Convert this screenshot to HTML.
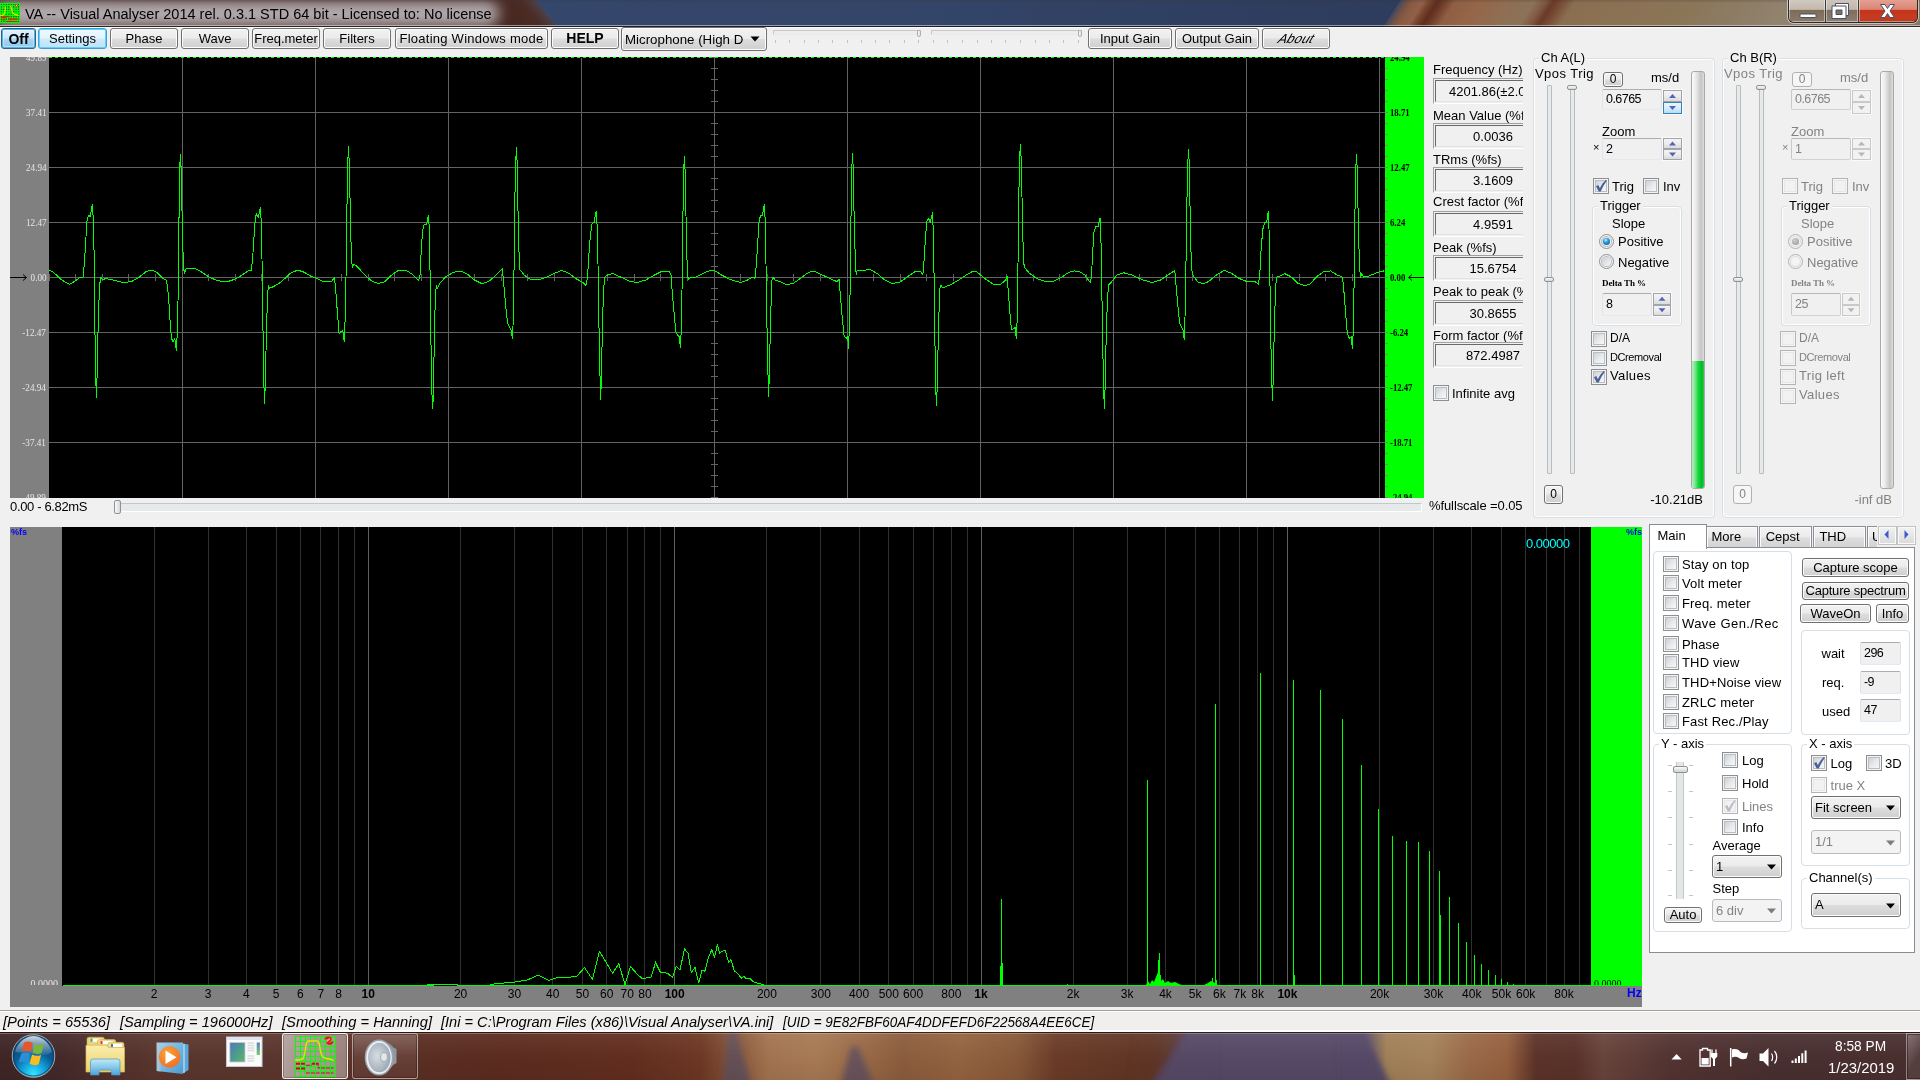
<!DOCTYPE html>
<html><head><meta charset="utf-8"><title>VA</title>
<style>
*{box-sizing:border-box;margin:0;padding:0}
html,body{width:1920px;height:1080px;overflow:hidden}
body{background:#f0f0f0;font-family:"Liberation Sans",sans-serif;font-size:13px;color:#000;position:relative}
.a{position:absolute}
#gs{position:absolute;left:0;top:0;width:1920px;height:1080px;will-change:transform}
.t{position:absolute;white-space:nowrap;line-height:1}
.btn{position:absolute;border:1px solid #707070;border-radius:3px;background:linear-gradient(#f2f2f2 0%,#ebebeb 48%,#dddddd 52%,#cfcfcf 100%);box-shadow:inset 0 0 0 1px #fcfcfc;text-align:center;white-space:nowrap;overflow:hidden}
.dis{color:#838383}
.cb{position:absolute;width:16px;height:16px;border:1px solid #8e8f8f;background:#f4f4f4}
.cb i{position:absolute;left:1px;top:1px;width:12px;height:12px;border:1px solid #b9bec4;background:linear-gradient(135deg,#cdd1d6 0,#e6e8ea 50%,#f8f8f9 100%)}
.cbd{border-color:#b4b4b4;background:#f6f6f6}
.cbd i{border-color:#e4e6e8;background:#f2f2f2}
.grp{position:absolute;border:1px solid #d5dfe5;border-radius:4px;box-shadow:inset 0 0 0 1px #fff}
.gl{position:absolute;background:#f0f0f0;white-space:nowrap;line-height:1;padding:0 2px}
.sunk{position:absolute;border:1px solid;border-color:#a0a0a0 #fff #fff #a0a0a0;background:#f0f0f0}
.sunk i{position:absolute;left:1px;top:1px;right:1px;bottom:1px;border:1px solid;border-color:#696969 #e3e3e3 #e3e3e3 #696969}
.edit{position:absolute;border:1px solid #abadb3;border-color:#abadb3 #dbdfe6 #e3e9ef #e2e3ea;background:#f0f0f0;border-radius:2px}
</style></head><body><div id="gs">
<!-- title bar -->
<div class="a" id="tb" style="left:0;top:0;width:1920px;height:27px;overflow:hidden;background:linear-gradient(90deg,#35486d 0,#33466a 45%,#2e3c5d 70%,#2c3a5a 100%)">
<div class="a" style="left:-40px;top:0;width:577px;height:27px;transform-origin:0 0;transform:skewX(39deg);background:linear-gradient(90deg,#4c2d26 0,#48271f 60%,#47261e 90%,#4a2c25 97%,#4e3a3c 99%,#3f4661 100%)"></div>
<div class="a" style="left:1383px;top:0;width:600px;height:27px;transform-origin:0 100%;transform:skewX(-33deg);background:linear-gradient(90deg,#3a4766 0,#6a5048 6px,#8a5a42 14px,#91604a 24px,#7a452f 30px,#5e2e1e 38px,#6c3a26 44px,#8f5e44 56px,#956648 80px,#8f6e52 110px,#8b7258 135px,#80583f 146px,#6a3a28 154px,#74462f 160px,#8a6e50 176px,#8c7355 250px,#8b7658 300px,#8d7c64 340px,#928470 400px,#8c7c68 440px,#857460 600px)"></div>
<div class="a" style="left:-6px;top:1px;width:505px;height:25px;border-radius:12px;background:rgba(228,236,246,.68);filter:blur(7px)"></div>
<div class="a" style="left:0;top:0;width:1920px;height:3px;background:linear-gradient(rgba(60,50,50,.25),rgba(40,20,20,0))"></div>
<span class="t" style="left:25px;top:6px;font-size:15.5px;color:#000;transform-origin:0 0;transform:scaleX(.9366)" id="ttxt">VA -- Visual Analyser 2014 rel. 0.3.1 STD 64 bit - Licensed to: No license</span>
<svg class="a" style="left:0px;top:3px" width="20" height="20" viewBox="0 0 41 41"><rect x="0.5" y="0.5" width="40" height="40" fill="#3a5a3a"/><path d="M3 3H38V38H3Z" fill="#1e3a1e"/><path d="M5.500 5.500h5v5h-5zM15.500 15.500h5v5h-5zM25.500 10.500h5v5h-5zM30.500 20.500h5v5h-5zM10.500 25.500h5v5h-5z" fill="#7a5a80"/><path d="M1 27h9v2h-9zM1 32h9v2h-9zM10 29h7v1h-7zM17 27h7v2h-7zM11 32v5h14v1h-15v-6zM24 29v3h15v1h-16v-4zM26 37h13v1h-13z" fill="#c01008"/><path d="M0.5 0V41M0 0.5H41M5.5 0V41M0 5.5H41M10.5 0V41M0 10.5H41M15.5 0V41M0 15.5H41M20.5 0V41M0 20.5H41M25.5 0V41M0 25.5H41M30.5 0V41M0 30.5H41M35.5 0V41M0 35.5H41M40.5 0V41M0 40.5H41" stroke="#00ff00" stroke-width="2.6" shape-rendering="auto"/><path d="M2 29H12L12 27.500H18M2 34.500H11M20.500 30V36M13 38H36M22 33H36" stroke="#ee1010" stroke-width="2.2"/><path d="M0 25.500L6 25L9 22C10.500 18 10.500 12 11.500 8M22 6C23.500 12 24 18 27 21.500C30 24.500 34 24.500 38 25.500" stroke="#f0e000" stroke-width="2.400" fill="none"/><path d="M30 6.500L32 3L37 3L35 8.500Z" fill="#f01010"/><path d="M32.500 7.500L34.500 3.500" stroke="#fff" stroke-width="1.800"/></svg>
<div class="a" style="left:1788px;top:-1px;width:130px;height:24px;border:1px solid #2b2b2b;border-top:none;border-radius:0 0 6px 6px;box-shadow:0 0 0 1px rgba(255,255,255,.55);overflow:hidden">
<div class="a" style="left:0;top:0;width:36px;height:23px;background:linear-gradient(#d3cbc2 0,#c3b8ac 45%,#7e6c5a 50%,#8b7a68 100%);box-shadow:inset 0 0 0 1px rgba(255,255,255,.45)"></div>
<div class="a" style="left:36px;top:0;width:1px;height:23px;background:#3a3a3a"></div>
<div class="a" style="left:37px;top:0;width:32px;height:23px;background:linear-gradient(#cfc7bf 0,#bfb5aa 45%,#7f6e5e 50%,#8c7e74 100%);box-shadow:inset 0 0 0 1px rgba(255,255,255,.45)"></div>
<div class="a" style="left:69px;top:0;width:1px;height:23px;background:#3a3a3a"></div>
<div class="a" style="left:70px;top:0;width:59px;height:23px;background:linear-gradient(#e6a294 0,#dc8574 45%,#c2351b 50%,#c93a1e 75%,#b53a26 100%);box-shadow:inset 0 0 0 1px rgba(255,255,255,.4)"></div>
</div>
<svg class="a" style="left:1788px;top:0" width="132" height="24" viewBox="1788 0 132 24">
<rect x="1800" y="14" width="16" height="3.5" rx="0.8" fill="#fff" stroke="#4a4f63" stroke-width="1"/>
<path d="M1835.5 3.5H1848.5V15.5H1845.5V6.5H1835.5Z" fill="#fff" stroke="#4a4f63" stroke-width="1"/>
<path d="M1832 6H1846V18.5H1832ZM1836 10V14.5H1842V10Z" fill="#fff" fill-rule="evenodd" stroke="#4a4f63" stroke-width="1"/>
<path d="M1880.5 4.5H1885L1887.5 8.5L1890 4.5H1894.5L1890 11L1894.5 17.5H1890L1887.5 13.5L1885 17.5H1880.5L1885 11Z" fill="#fff" stroke="#4a4f63" stroke-width="1" stroke-linejoin="round"/>
</svg>
<div class="a" style="left:0;top:25px;width:1920px;height:1px;background:rgba(235,230,235,.55)"></div>
<div class="a" style="left:0;top:26px;width:1920px;height:1px;background:rgba(22,22,30,.82)"></div>
</div>
<!-- toolbar -->
<div class="a" style="left:0;top:27px;width:1920px;height:1px;background:#fafafa"></div>
<div class="btn" style="left:1px;top:28px;width:35px;height:21px;line-height:19px;font-size:13px;border-color:#2c628b;background:linear-gradient(#e3f2fc 0,#c9e7fa 48%,#a9d6f3 52%,#92c6ea 100%);box-shadow:inset 0 0 0 1px #48b5e6, inset 0 0 0 2px rgba(255,255,255,.35);font-size:14px;line-height:21px"><b>Off</b></div>
<div class="btn" style="left:38px;top:28px;width:69px;height:21px;line-height:19px;font-size:13px;border-color:#3c9fd9;background:linear-gradient(#f0f9fe 0,#e2f3fc 48%,#cfeafa 52%,#c0e2f6 100%);box-shadow:inset 0 0 0 1px #5fd2f8">Settings</div>
<div class="btn" style="left:110px;top:28px;width:68px;height:21px;line-height:19px;font-size:13px;">Phase</div>
<div class="btn" style="left:181px;top:28px;width:68px;height:21px;line-height:19px;font-size:13px;">Wave</div>
<div class="btn" style="left:252px;top:28px;width:68px;height:21px;line-height:19px;font-size:13px;">Freq.meter</div>
<div class="btn" style="left:323px;top:28px;width:68px;height:21px;line-height:19px;font-size:13px;">Filters</div>
<div class="btn" style="left:395px;top:28px;width:153px;height:21px;line-height:19px;font-size:13px;letter-spacing:.25px">Floating Windows mode</div>
<div class="btn" style="left:551px;top:28px;width:68px;height:21px;line-height:19px;font-size:13px;font-size:14px"><b>HELP</b></div>
<div class="btn" style="left:621px;top:27px;width:146px;height:24px;line-height:24px;text-align:left;padding-left:3px;font-size:13.3px">Microphone (High D</div>
<svg class="a" style="left:750px;top:36px" width="10" height="6"><path d="M0.5 0.5H9.5L5 5.5Z" fill="#000"/></svg>
<div class="a" style="left:773px;top:30px;width:147px;height:5px;border:1px solid #c4cacc;border-bottom-color:#e8ebec;border-radius:1px;background:#eceeee"></div>
<div class="a" style="left:917px;top:30px;width:4px;height:7px;border:1px solid #a9aeb1;border-radius:1px 1px 2px 2px;background:linear-gradient(90deg,#f8f8f8,#e2e2e2)"></div>
<div class="a" style="left:775px;top:40px;width:1px;height:3px;background:#c2c2c2"></div><div class="a" style="left:789px;top:40px;width:1px;height:3px;background:#c2c2c2"></div><div class="a" style="left:804px;top:40px;width:1px;height:3px;background:#c2c2c2"></div><div class="a" style="left:818px;top:40px;width:1px;height:3px;background:#c2c2c2"></div><div class="a" style="left:832px;top:40px;width:1px;height:3px;background:#c2c2c2"></div><div class="a" style="left:847px;top:40px;width:1px;height:3px;background:#c2c2c2"></div><div class="a" style="left:861px;top:40px;width:1px;height:3px;background:#c2c2c2"></div><div class="a" style="left:875px;top:40px;width:1px;height:3px;background:#c2c2c2"></div><div class="a" style="left:889px;top:40px;width:1px;height:3px;background:#c2c2c2"></div><div class="a" style="left:904px;top:40px;width:1px;height:3px;background:#c2c2c2"></div><div class="a" style="left:918px;top:40px;width:1px;height:3px;background:#c2c2c2"></div>
<div class="a" style="left:931px;top:30px;width:149px;height:5px;border:1px solid #c4cacc;border-bottom-color:#e8ebec;border-radius:1px;background:#eceeee"></div>
<div class="a" style="left:1078px;top:30px;width:4px;height:7px;border:1px solid #a9aeb1;border-radius:1px 1px 2px 2px;background:linear-gradient(90deg,#f8f8f8,#e2e2e2)"></div>
<div class="a" style="left:933px;top:40px;width:1px;height:3px;background:#c2c2c2"></div><div class="a" style="left:947px;top:40px;width:1px;height:3px;background:#c2c2c2"></div><div class="a" style="left:962px;top:40px;width:1px;height:3px;background:#c2c2c2"></div><div class="a" style="left:977px;top:40px;width:1px;height:3px;background:#c2c2c2"></div><div class="a" style="left:991px;top:40px;width:1px;height:3px;background:#c2c2c2"></div><div class="a" style="left:1005px;top:40px;width:1px;height:3px;background:#c2c2c2"></div><div class="a" style="left:1020px;top:40px;width:1px;height:3px;background:#c2c2c2"></div><div class="a" style="left:1035px;top:40px;width:1px;height:3px;background:#c2c2c2"></div><div class="a" style="left:1049px;top:40px;width:1px;height:3px;background:#c2c2c2"></div><div class="a" style="left:1063px;top:40px;width:1px;height:3px;background:#c2c2c2"></div><div class="a" style="left:1078px;top:40px;width:1px;height:3px;background:#c2c2c2"></div>
<div class="btn" style="left:1088px;top:28px;width:84px;height:21px;line-height:19px;font-size:13px;">Input Gain</div>
<div class="btn" style="left:1175px;top:28px;width:84px;height:21px;line-height:19px;font-size:13px;">Output Gain</div>
<div class="btn" style="left:1262px;top:28px;width:68px;height:21px;line-height:19px;font-size:13px;"><span style="display:inline-block;transform:skewX(-30deg);letter-spacing:.2px">About</span></div>
<!-- oscilloscope -->
<div class="a" style="left:10px;top:57px;width:39px;height:441px;background:#808080"></div>
<div class="a" style="left:49px;top:57px;width:1336px;height:441px;background:#000"></div>
<div class="a" style="left:1385px;top:57px;width:39px;height:441px;background:#00ff00"></div>
<svg class="a" style="left:0;top:0" width="1440" height="500" viewBox="0 0 1440 500">
<path d="M49 112.5H1385M49 167.5H1385M49 222.5H1385M49 277.5H1385M49 332.5H1385M49 387.5H1385M49 442.5H1385M182.5 58V498M315.5 58V498M448.5 58V498M581.5 58V498M714.5 58V498M847.5 58V498M980.5 58V498M1113.5 58V498M1246.5 58V498M1379.5 58V498M711 57.5H718M711 68.5H718M711 79.5H718M711 90.5H718M711 101.5H718M711 112.5H718M711 123.5H718M711 134.5H718M711 145.5H718M711 156.5H718M711 167.5H718M711 178.5H718M711 189.5H718M711 200.5H718M711 211.5H718M711 222.5H718M711 233.5H718M711 244.5H718M711 255.5H718M711 266.5H718M711 277.5H718M711 288.5H718M711 299.5H718M711 310.5H718M711 321.5H718M711 332.5H718M711 343.5H718M711 354.5H718M711 365.5H718M711 376.5H718M711 387.5H718M711 398.5H718M711 409.5H718M711 420.5H718M711 431.5H718M711 442.5H718M711 453.5H718M711 464.5H718M711 475.5H718M711 486.5H718M711 497.5H718M49.5 274V281M75.5 274V281M102.5 274V281M128.5 274V281M155.5 274V281M182.5 274V281M208.5 274V281M235.5 274V281M261.5 274V281M288.5 274V281M315.5 274V281M341.5 274V281M368.5 274V281M394.5 274V281M421.5 274V281M448.5 274V281M474.5 274V281M501.5 274V281M527.5 274V281M554.5 274V281M581.5 274V281M607.5 274V281M634.5 274V281M660.5 274V281M687.5 274V281M714.5 274V281M740.5 274V281M767.5 274V281M793.5 274V281M820.5 274V281M847.5 274V281M873.5 274V281M900.5 274V281M926.5 274V281M953.5 274V281M980.5 274V281M1006.5 274V281M1033.5 274V281M1059.5 274V281M1086.5 274V281M1113.5 274V281M1139.5 274V281M1166.5 274V281M1192.5 274V281M1219.5 274V281M1246.5 274V281M1272.5 274V281M1299.5 274V281M1325.5 274V281M1352.5 274V281M1379.5 274V281" stroke="#626262" stroke-width="1" fill="none" shape-rendering="crispEdges"/>
<path d="M49 57.5H1385" stroke="#00ff00" stroke-width="1" stroke-dasharray="3 3" shape-rendering="crispEdges"/>
<path d="M1385 57.5H1388M1385 68.5H1388M1385 79.5H1388M1385 90.5H1388M1385 101.5H1388M1385 112.5H1388M1385 123.5H1388M1385 134.5H1388M1385 145.5H1388M1385 156.5H1388M1385 167.5H1388M1385 178.5H1388M1385 189.5H1388M1385 200.5H1388M1385 211.5H1388M1385 222.5H1388M1385 233.5H1388M1385 244.5H1388M1385 255.5H1388M1385 266.5H1388M1385 277.5H1388M1385 288.5H1388M1385 299.5H1388M1385 310.5H1388M1385 321.5H1388M1385 332.5H1388M1385 343.5H1388M1385 354.5H1388M1385 365.5H1388M1385 376.5H1388M1385 387.5H1388M1385 398.5H1388M1385 409.5H1388M1385 420.5H1388M1385 431.5H1388M1385 442.5H1388M1385 453.5H1388M1385 464.5H1388M1385 475.5H1388M1385 486.5H1388M1385 497.5H1388" stroke="#808080" stroke-width="1" shape-rendering="crispEdges"/>
<path d="M49.4 270.1 L53.4 272.3 L61.5 279.8 L69.5 284.4 L76.2 280.3 L80.3 277.1 L83.0 277.1 L84.3 264.2 L85.6 242.8 L87.0 221.3 L88.3 215.4 L90.2 216.4 L92.3 204.4 L93.4 221.3 L94.2 258.9 L94.8 323.3 L95.8 379.7 L96.4 397.7 L97.2 371.6 L98.3 317.9 L99.6 285.7 L100.7 277.1 L102.3 279.8 L105.8 278.5 L112.5 279.8 L123.2 282.5 L131.3 281.7 L139.3 277.1 L146.0 271.7 L151.4 270.1 L156.8 272.3 L162.1 277.7 L166.2 280.3 L167.5 285.7 L168.9 301.8 L170.2 323.3 L171.5 338.1 L172.9 342.1 L174.8 338.1 L176.4 350.7 L177.2 334.0 L178.0 301.8 L178.5 264.2 L179.1 210.5 L179.6 170.3 L180.4 154.2 L181.2 170.3 L182.0 210.5 L182.8 248.1 L183.9 269.6 L184.4 273.6 L186.3 268.3 L194.4 268.3 L201.1 271.7 L207.8 276.3 L214.5 279.5 L222.6 281.7 L230.6 280.9 L238.7 277.1 L245.4 272.8 L249.4 270.1 L251.3 270.9 L252.6 258.9 L254.0 237.4 L255.3 218.6 L256.4 213.8 L258.3 217.2 L260.4 207.3 L261.2 221.3 L262.0 258.9 L262.8 317.9 L263.9 385.0 L264.7 403.8 L265.5 371.6 L266.8 317.9 L268.2 285.2 L269.5 288.4 L273.6 286.5 L278.9 283.6 L284.3 279.0 L291.0 272.8 L297.7 270.1 L304.4 272.3 L311.1 276.3 L316.5 278.2 L323.2 281.7 L331.3 281.7 L334.5 277.7 L335.8 291.1 L337.4 312.6 L339.1 334.0 L341.2 331.3 L342.8 330.8 L344.2 341.5 L345.2 317.9 L346.0 277.7 L346.8 215.9 L347.7 164.9 L348.5 146.1 L349.3 164.9 L350.3 210.5 L351.4 258.9 L352.5 267.4 L354.1 264.2 L358.1 267.4 L364.8 275.0 L371.5 280.9 L378.3 283.6 L385.0 281.7 L391.7 275.0 L398.4 270.4 L406.4 270.4 L413.2 275.0 L418.5 280.3 L420.1 275.0 L421.2 250.8 L422.6 230.7 L424.4 224.0 L426.6 224.0 L428.5 215.4 L429.3 229.3 L430.1 275.0 L430.9 339.4 L431.9 393.1 L432.8 408.4 L433.6 385.0 L434.6 317.9 L436.2 285.7 L437.3 288.4 L440.0 283.0 L445.4 277.1 L453.4 272.3 L460.1 270.9 L466.8 273.6 L473.6 279.5 L481.6 283.6 L488.3 281.7 L495.0 276.3 L500.4 270.9 L502.3 268.3 L503.9 285.7 L505.8 307.2 L507.7 323.3 L509.8 327.3 L511.1 330.0 L512.5 338.9 L513.3 317.9 L514.1 264.2 L514.9 197.1 L515.7 162.2 L516.5 147.4 L517.2 164.9 L518.0 210.5 L518.8 248.1 L519.9 269.6 L521.5 271.7 L524.2 275.0 L529.5 279.0 L537.6 279.8 L545.6 277.7 L553.7 273.6 L561.7 270.4 L568.5 273.1 L576.5 279.0 L583.2 282.5 L585.9 285.2 L587.5 277.7 L588.6 258.9 L590.2 237.4 L591.8 224.0 L594.0 222.6 L596.1 211.3 L597.2 226.6 L598.0 264.2 L598.8 317.9 L599.9 371.6 L600.7 399.8 L601.5 371.6 L602.6 317.9 L603.9 285.7 L605.0 277.1 L607.4 275.0 L612.8 273.6 L620.8 277.1 L628.9 280.9 L636.9 282.5 L646.3 279.8 L654.4 275.0 L661.1 271.7 L669.1 271.5 L671.0 275.0 L672.6 296.4 L674.5 317.9 L676.1 332.7 L678.0 335.4 L679.3 336.7 L680.4 347.4 L681.2 331.3 L682.0 291.1 L682.8 224.0 L683.6 173.0 L684.4 156.0 L685.2 173.0 L686.0 215.9 L686.8 256.2 L687.9 277.1 L688.7 279.8 L690.6 277.1 L696.0 277.1 L702.7 273.6 L709.4 270.7 L714.8 270.7 L721.5 275.0 L730.9 279.8 L740.3 282.5 L747.0 280.3 L752.3 277.1 L755.0 278.2 L756.4 264.2 L757.7 242.8 L759.1 221.3 L760.4 215.9 L762.3 215.9 L764.4 204.4 L765.2 221.3 L766.0 264.2 L766.8 317.9 L767.9 371.6 L768.7 396.6 L769.5 366.2 L770.6 317.9 L771.9 280.3 L773.0 276.8 L775.2 280.3 L780.5 281.7 L787.2 284.9 L794.0 283.0 L802.0 277.1 L808.7 272.3 L814.1 270.9 L820.8 274.4 L830.2 278.5 L836.9 281.7 L839.1 279.0 L840.4 296.4 L842.3 317.9 L844.2 336.7 L846.3 338.1 L847.7 336.7 L848.5 348.8 L849.3 328.7 L850.1 291.1 L850.9 224.0 L851.7 170.3 L852.5 153.4 L853.3 170.3 L854.1 215.9 L855.2 256.2 L856.2 275.0 L857.0 270.9 L862.4 270.4 L870.5 269.6 L877.2 273.6 L885.2 280.3 L891.9 283.6 L900.0 282.2 L908.1 276.3 L914.8 271.7 L920.9 271.5 L922.8 275.0 L924.2 258.9 L925.5 237.4 L926.8 221.3 L928.7 218.6 L930.3 222.6 L932.5 212.4 L933.3 232.0 L934.1 277.7 L934.9 339.4 L935.7 387.7 L936.5 405.7 L937.3 385.0 L938.4 331.3 L939.7 289.7 L940.8 285.2 L943.0 287.9 L951.0 284.4 L959.1 279.8 L967.1 274.4 L972.5 271.5 L976.5 271.5 L977.4 272.3 L985.5 279.0 L993.6 284.4 L1000.3 284.4 L1005.6 280.3 L1007.0 276.3 L1008.3 291.1 L1009.9 312.6 L1011.5 330.0 L1013.7 328.7 L1015.0 327.3 L1016.4 338.9 L1017.2 317.9 L1018.0 264.2 L1018.8 197.1 L1019.6 159.5 L1020.4 144.0 L1021.2 159.5 L1022.0 197.1 L1022.8 237.4 L1023.9 264.2 L1025.2 268.3 L1029.8 273.6 L1036.5 278.5 L1045.9 281.7 L1054.0 281.1 L1062.0 277.1 L1068.7 272.3 L1074.1 270.9 L1079.5 271.5 L1084.8 275.0 L1090.2 282.5 L1091.5 276.3 L1092.6 253.5 L1094.0 232.0 L1095.6 226.6 L1098.0 226.6 L1100.1 218.1 L1100.9 237.4 L1101.7 280.3 L1102.6 339.4 L1103.6 387.7 L1104.4 408.4 L1105.2 385.0 L1106.3 331.3 L1107.7 293.8 L1109.0 284.4 L1111.7 281.7 L1117.0 275.0 L1123.8 272.8 L1131.8 275.0 L1142.6 279.8 L1151.9 282.5 L1160.0 280.3 L1168.1 275.0 L1173.4 271.5 L1174.8 270.9 L1176.1 285.7 L1178.0 307.2 L1179.6 323.3 L1181.5 327.3 L1182.8 328.7 L1184.2 339.4 L1185.0 317.9 L1185.8 277.7 L1186.6 215.9 L1187.7 164.9 L1188.5 149.3 L1189.3 164.9 L1190.1 210.5 L1191.1 256.2 L1192.2 273.6 L1193.6 276.3 L1197.6 281.7 L1203.0 283.8 L1208.3 281.7 L1216.4 275.0 L1224.4 270.4 L1231.1 273.1 L1239.2 278.5 L1247.2 281.7 L1255.3 281.7 L1258.5 284.4 L1259.9 272.3 L1261.2 248.1 L1262.8 229.3 L1264.7 222.6 L1266.6 222.6 L1268.2 211.3 L1269.0 229.3 L1269.8 269.6 L1270.6 331.3 L1271.7 379.7 L1272.5 400.3 L1273.3 377.0 L1274.4 323.3 L1275.7 285.7 L1276.8 277.1 L1279.5 276.3 L1284.8 273.6 L1291.5 277.1 L1298.3 283.6 L1305.0 285.7 L1310.3 283.8 L1317.0 276.3 L1323.8 271.7 L1330.5 270.9 L1337.2 275.0 L1342.6 277.1 L1343.9 291.1 L1345.8 315.2 L1347.4 334.0 L1349.3 338.1 L1351.1 336.7 L1352.5 348.8 L1353.3 328.7 L1354.1 283.0 L1354.9 215.9 L1355.7 170.3 L1356.5 155.0 L1357.3 170.3 L1358.1 213.2 L1359.2 256.2 L1360.3 277.1 L1361.9 273.6 L1363.5 277.1 L1368.1 276.3 L1374.8 273.6 L1380.1 271.5 L1384.2 270.9" stroke="#00ff00" stroke-width="1" fill="none" stroke-linejoin="round" shape-rendering="crispEdges"/>
<path d="M10 277.5H26M23 274.5L26.5 277.5L23 280.5" stroke="#000" stroke-width="1" fill="none"/>
<path d="M1424 277.5H1409M1412 274.5L1408.5 277.5L1412 280.5" stroke="#000" stroke-width="1" fill="none"/>
</svg>
<div class="a" style="left:10px;top:57px;width:39px;height:441px;overflow:hidden;font-family:'Liberation Serif',serif;font-size:10px;color:#e6e6e6">
<span class="t" style="right:3px;top:-4px;transform-origin:100% 0;transform:scaleX(.91)">49.89</span>
<span class="t" style="right:3px;top:51px;transform-origin:100% 0;transform:scaleX(.91)">37.41</span>
<span class="t" style="right:3px;top:106px;transform-origin:100% 0;transform:scaleX(.91)">24.94</span>
<span class="t" style="right:3px;top:161px;transform-origin:100% 0;transform:scaleX(.91)">12.47</span>
<span class="t" style="right:3px;top:216px;transform-origin:100% 0;transform:scaleX(.91)">0.00</span>
<span class="t" style="right:3px;top:271px;transform-origin:100% 0;transform:scaleX(.91)">-12.47</span>
<span class="t" style="right:3px;top:326px;transform-origin:100% 0;transform:scaleX(.91)">-24.94</span>
<span class="t" style="right:3px;top:381px;transform-origin:100% 0;transform:scaleX(.91)">-37.41</span>
<span class="t" style="right:3px;top:436px;transform-origin:100% 0;transform:scaleX(.91)">-49.89</span>
</div>
<div class="a" style="left:1385px;top:57px;width:39px;height:441px;overflow:hidden;font-family:'Liberation Serif',serif;font-size:10px;color:#000">
<span class="t" style="left:5px;top:-4px;transform-origin:0 0;transform:scaleX(.87);font-weight:bold">24.94</span>
<span class="t" style="left:5px;top:51px;transform-origin:0 0;transform:scaleX(.87);font-weight:bold">18.71</span>
<span class="t" style="left:5px;top:106px;transform-origin:0 0;transform:scaleX(.87);font-weight:bold">12.47</span>
<span class="t" style="left:5px;top:161px;transform-origin:0 0;transform:scaleX(.87);font-weight:bold">6.24</span>
<span class="t" style="left:5px;top:216px;transform-origin:0 0;transform:scaleX(.87);font-weight:bold">0.00</span>
<span class="t" style="left:5px;top:271px;transform-origin:0 0;transform:scaleX(.87);font-weight:bold">-6.24</span>
<span class="t" style="left:5px;top:326px;transform-origin:0 0;transform:scaleX(.87);font-weight:bold">-12.47</span>
<span class="t" style="left:5px;top:381px;transform-origin:0 0;transform:scaleX(.87);font-weight:bold">-18.71</span>
<span class="t" style="left:5px;top:436px;transform-origin:0 0;transform:scaleX(.87);font-weight:bold">-24.94</span>
</div>
<!-- measurements -->
<div class="a" style="left:1425px;top:57px;width:98px;height:470px;overflow:hidden">
<span class="t" style="left:8px;top:6.3px;font-size:13px;">Frequency (Hz)</span>
<span class="t" style="left:8px;top:51.5px;font-size:13px;">Mean Value (%fs)</span>
<span class="t" style="left:8px;top:96.3px;font-size:13px;">TRms (%fs)</span>
<span class="t" style="left:8px;top:137.6px;font-size:13px;">Crest factor (%fs)</span>
<span class="t" style="left:8px;top:183.6px;font-size:13px;">Peak (%fs)</span>
<span class="t" style="left:8px;top:228.0px;font-size:13px;">Peak to peak (%fs)</span>
<span class="t" style="left:8px;top:271.6px;font-size:13px;">Form factor (%fs)</span>
<div class="sunk" style="left:8px;top:21px;width:116px;height:26px"><i></i></div>
<span class="t" style="left:10px;width:116px;text-align:center;top:28px;font-size:13px">4201.86(±2.02)</span>
<div class="sunk" style="left:8px;top:66px;width:116px;height:26px"><i></i></div>
<span class="t" style="left:10px;width:116px;text-align:center;top:73px;font-size:13px">0.0036</span>
<div class="sunk" style="left:8px;top:110px;width:116px;height:26px"><i></i></div>
<span class="t" style="left:10px;width:116px;text-align:center;top:117px;font-size:13px">3.1609</span>
<div class="sunk" style="left:8px;top:154px;width:116px;height:26px"><i></i></div>
<span class="t" style="left:10px;width:116px;text-align:center;top:161px;font-size:13px">4.9591</span>
<div class="sunk" style="left:8px;top:198px;width:116px;height:26px"><i></i></div>
<span class="t" style="left:10px;width:116px;text-align:center;top:205px;font-size:13px">15.6754</span>
<div class="sunk" style="left:8px;top:243px;width:116px;height:26px"><i></i></div>
<span class="t" style="left:10px;width:116px;text-align:center;top:250px;font-size:13px">30.8655</span>
<div class="sunk" style="left:8px;top:285px;width:116px;height:26px"><i></i></div>
<span class="t" style="left:10px;width:116px;text-align:center;top:292px;font-size:13px">872.4987</span>
</div>
<div class="cb" style="left:1433px;top:385px"><i></i></div>
<span class="t" style="left:1452px;top:386.5px;font-size:13px;">Infinite avg</span>
<span class="t" style="left:1429px;top:499.0px;font-size:13px;letter-spacing:-.1px">%fullscale =0.05</span>
<!-- Ch A -->
<div class="grp" style="left:1533px;top:58px;width:182px;height:460px"></div><span class="gl" style="left:1539px;top:51px;font-size:13px;color:#000;background:#f0f0f0">Ch A(L)</span>
<span class="t" style="left:1535px;top:67.3px;font-size:13px;color:#000;letter-spacing:.45px">Vpos Trig</span>
<div class="a" style="left:1547px;top:85px;width:5px;height:389px;border:1px solid #b6bcbf;border-radius:1px;background:#e7eaea"></div><div class="a" style="left:1544px;top:277px;width:10px;height:5px;border:1px solid #8c9295;border-radius:2px;background:linear-gradient(#f8f8f8,#d6d6d6)"></div>
<div class="a" style="left:1570px;top:85px;width:5px;height:389px;border:1px solid #b6bcbf;border-radius:1px;background:#e7eaea"></div><div class="a" style="left:1567px;top:85px;width:10px;height:5px;border:1px solid #8c9295;border-radius:2px;background:linear-gradient(#f8f8f8,#d6d6d6)"></div>
<div class="btn" style="left:1603px;top:72px;width:20px;height:15px;line-height:13px;font-size:13px;font-size:12px;color:#000;">0</div>
<span class="t" style="left:1651px;top:71.3px;font-size:13px;color:#000">ms/d</span>
<div class="edit" style="left:1602px;top:89px;width:60px;height:21px;border-color:#abadb3 #dbdfe6 #e3e9ef #e2e3ea"></div><span class="t" style="left:1606px;top:93.4px;font-size:12.5px;color:#000;letter-spacing:-.55px">0.6765</span>
<div class="a" style="left:1662px;top:89px;width:21px;height:26px;background:#fbfbfb"></div><div class="a" style="left:1663px;top:90.0px;width:19px;height:12.0px;border:1px solid #a3a3ab;background:linear-gradient(#f4f4f4 0,#ececec 50%,#dadada 100%)"></div><svg class="a" style="left:0;top:0" width="1920" height="1080"><path d="M1669.0 98.0L1672.5 94.0L1676.0 98.0Z" fill="#5264b8"/></svg><div class="a" style="left:1663px;top:102.0px;width:19px;height:12.0px;border:1px solid #3c7fb1;background:linear-gradient(#e8f5fd 0,#d6eefb 50%,#b3ddf6 100%)"></div><svg class="a" style="left:0;top:0" width="1920" height="1080"><path d="M1669.0 106.0L1672.5 110.0L1676.0 106.0Z" fill="#5264b8"/></svg>
<span class="t" style="left:1602px;top:124.7px;font-size:13px;color:#000">Zoom</span>
<span class="t" style="left:1593px;top:141.7px;font-size:11px;color:#000">×</span>
<div class="edit" style="left:1602px;top:138px;width:60px;height:22px;border-color:#abadb3 #dbdfe6 #e3e9ef #e2e3ea"></div><span class="t" style="left:1606px;top:142.9px;font-size:12.5px;color:#000;letter-spacing:-.55px">2</span>
<div class="a" style="left:1662px;top:137px;width:21px;height:24px;background:#fbfbfb"></div><div class="a" style="left:1663px;top:138.0px;width:19px;height:11.0px;border:1px solid #a3a3ab;background:linear-gradient(#f4f4f4 0,#ececec 50%,#dadada 100%)"></div><svg class="a" style="left:0;top:0" width="1920" height="1080"><path d="M1669.0 145.5L1672.5 141.5L1676.0 145.5Z" fill="#5264b8"/></svg><div class="a" style="left:1663px;top:149.0px;width:19px;height:11.0px;border:1px solid #a3a3ab;background:linear-gradient(#f4f4f4 0,#ececec 50%,#dadada 100%)"></div><svg class="a" style="left:0;top:0" width="1920" height="1080"><path d="M1669.0 152.5L1672.5 156.5L1676.0 152.5Z" fill="#5264b8"/></svg>
<div class="cb" style="left:1593px;top:178px"><i></i><svg class="a" style="left:-1px;top:-1px" width="16" height="16" viewBox="0 0 16 16"><path d="M3 8.3L5.3 6.9L6.9 10.2C8.5 6.6 10.4 4 12.9 1.9L13.9 2.8C11.4 6 9.4 9.600 7.700 13.600L5.700 13.600Z" fill="#4a5f97"/></svg></div>
<span class="t" style="left:1612px;top:179.9px;font-size:13px;color:#000">Trig</span>
<div class="cb" style="left:1643px;top:178px"><i></i></div>
<span class="t" style="left:1663px;top:179.9px;font-size:13px;color:#000">Inv</span>
<div class="grp" style="left:1592px;top:206px;width:90px;height:120px"></div><span class="gl" style="left:1598px;top:199px;font-size:13px;color:#000;background:#f0f0f0">Trigger</span>
<span class="t" style="left:1612px;top:217.3px;font-size:13px;color:#000">Slope</span>
<div class="a" style="left:1599px;top:234px;width:15px;height:15px;border-radius:50%;border:1px solid #8e8f8f;background:#f4f4f4"><div class="a" style="left:2px;top:2px;width:9px;height:9px;border-radius:50%;background:linear-gradient(135deg,#c8ccd2,#f9f9f9);box-shadow:0 0 0 1px #b7bcc2"></div><div class="a" style="left:3px;top:3px;width:7px;height:7px;border-radius:50%;background:radial-gradient(circle at 40% 30%,#c9f1ff 0,#2aa0e0 35%,#0c4f86 100%)"></div></div>
<span class="t" style="left:1618px;top:235.0px;font-size:13px;color:#000">Positive</span>
<div class="a" style="left:1599px;top:254px;width:15px;height:15px;border-radius:50%;border:1px solid #8e8f8f;background:#f4f4f4"><div class="a" style="left:2px;top:2px;width:9px;height:9px;border-radius:50%;background:linear-gradient(135deg,#c8ccd2,#f9f9f9);box-shadow:0 0 0 1px #b7bcc2"></div></div>
<span class="t" style="left:1618px;top:255.5px;font-size:13px;color:#000">Negative</span>
<span class="t" style="left:1602px;top:279px;font-family:'Liberation Serif',serif;font-weight:bold;font-size:9px;letter-spacing:-.1px;color:#000">Delta Th %</span>
<div class="edit" style="left:1602px;top:293px;width:50px;height:23px;border-color:#abadb3 #dbdfe6 #e3e9ef #e2e3ea"></div><span class="t" style="left:1606px;top:298.4px;font-size:12.5px;color:#000;letter-spacing:-.55px">8</span>
<div class="a" style="left:1652px;top:292px;width:20px;height:25px;background:#fbfbfb"></div><div class="a" style="left:1653px;top:293.0px;width:18px;height:11.5px;border:1px solid #a3a3ab;background:linear-gradient(#f4f4f4 0,#ececec 50%,#dadada 100%)"></div><svg class="a" style="left:0;top:0" width="1920" height="1080"><path d="M1658.5 300.75L1662.0 296.75L1665.5 300.75Z" fill="#5264b8"/></svg><div class="a" style="left:1653px;top:304.5px;width:18px;height:11.5px;border:1px solid #a3a3ab;background:linear-gradient(#f4f4f4 0,#ececec 50%,#dadada 100%)"></div><svg class="a" style="left:0;top:0" width="1920" height="1080"><path d="M1658.5 308.25L1662.0 312.25L1665.5 308.25Z" fill="#5264b8"/></svg>
<div class="cb" style="left:1591px;top:331px"><i></i></div>
<span class="t" style="left:1610px;top:332.1px;font-size:12px;color:#000">D/A</span>
<div class="cb" style="left:1591px;top:350px"><i></i></div>
<span class="t" style="left:1610px;top:352.0px;font-size:11px;color:#000;letter-spacing:-.4px">DCremoval</span>
<div class="cb" style="left:1591px;top:369px"><i></i><svg class="a" style="left:-1px;top:-1px" width="16" height="16" viewBox="0 0 16 16"><path d="M3 8.3L5.3 6.9L6.9 10.2C8.5 6.6 10.4 4 12.9 1.9L13.9 2.8C11.4 6 9.4 9.600 7.700 13.600L5.700 13.600Z" fill="#4a5f97"/></svg></div>
<span class="t" style="left:1610px;top:369.3px;font-size:13px;color:#000;letter-spacing:.35px">Values</span>
<div class="a" style="left:1691px;top:71px;width:14px;height:418px;border:1px solid #a9a9a9;border-radius:3px;background:linear-gradient(90deg,#fbfbfb 0,#ececec 30%,#d2d2d2 60%,#c4c4c4 75%,#dedede 100%);overflow:hidden"><div class="a" style="left:0;top:289px;width:12px;height:128px;background:linear-gradient(90deg,#b4f0c0 0,#7be592 25%,#1fd743 50%,#06c92c 70%,#08b528 85%,#2fd24e 100%)"></div></div>
<div class="btn" style="left:1544px;top:485px;width:19px;height:19px;line-height:17px;font-size:13px;font-size:12px;color:#000;">0</div>
<span class="t" style="left:1620px;width:83px;text-align:right;top:492.8px;font-size:13px;color:#000">-10.21dB</span>
<!-- Ch B -->
<div class="grp" style="left:1722px;top:58px;width:182px;height:460px"></div><span class="gl" style="left:1728px;top:51px;font-size:13px;color:#000;background:#f0f0f0">Ch B(R)</span>
<span class="t" style="left:1724px;top:67.3px;font-size:13px;color:#838383;letter-spacing:.45px">Vpos Trig</span>
<div class="a" style="left:1736px;top:85px;width:5px;height:389px;border:1px solid #b6bcbf;border-radius:1px;background:#e7eaea"></div><div class="a" style="left:1733px;top:277px;width:10px;height:5px;border:1px solid #8c9295;border-radius:2px;background:linear-gradient(#f8f8f8,#d6d6d6)"></div>
<div class="a" style="left:1759px;top:85px;width:5px;height:389px;border:1px solid #b6bcbf;border-radius:1px;background:#e7eaea"></div><div class="a" style="left:1756px;top:85px;width:10px;height:5px;border:1px solid #8c9295;border-radius:2px;background:linear-gradient(#f8f8f8,#d6d6d6)"></div>
<div class="btn" style="left:1792px;top:72px;width:20px;height:15px;line-height:13px;font-size:13px;font-size:12px;color:#838383;border-color:#adb2b5;background:#f6f6f6;box-shadow:none;">0</div>
<span class="t" style="left:1840px;top:71.3px;font-size:13px;color:#838383">ms/d</span>
<div class="edit" style="left:1791px;top:89px;width:60px;height:21px;border-color:#b4b6ba #c9ccd0 #cfd3d7 #c6c8cc"></div><span class="t" style="left:1795px;top:93.4px;font-size:12.5px;color:#838383;letter-spacing:-.55px">0.6765</span>
<div class="a" style="left:1851px;top:89px;width:21px;height:26px;background:#fbfbfb"></div><div class="a" style="left:1852px;top:90.0px;width:19px;height:12.0px;border:1px solid #c9c9c9;background:#f2f2f2"></div><svg class="a" style="left:0;top:0" width="1920" height="1080"><path d="M1858.0 98.0L1861.5 94.0L1865.0 98.0Z" fill="#b6b6b6"/></svg><div class="a" style="left:1852px;top:102.0px;width:19px;height:12.0px;border:1px solid #c9c9c9;background:#f2f2f2"></div><svg class="a" style="left:0;top:0" width="1920" height="1080"><path d="M1858.0 106.0L1861.5 110.0L1865.0 106.0Z" fill="#b6b6b6"/></svg>
<span class="t" style="left:1791px;top:124.7px;font-size:13px;color:#838383">Zoom</span>
<span class="t" style="left:1782px;top:141.7px;font-size:11px;color:#838383">×</span>
<div class="edit" style="left:1791px;top:138px;width:60px;height:22px;border-color:#b4b6ba #c9ccd0 #cfd3d7 #c6c8cc"></div><span class="t" style="left:1795px;top:142.9px;font-size:12.5px;color:#838383;letter-spacing:-.55px">1</span>
<div class="a" style="left:1851px;top:137px;width:21px;height:24px;background:#fbfbfb"></div><div class="a" style="left:1852px;top:138.0px;width:19px;height:11.0px;border:1px solid #c9c9c9;background:#f2f2f2"></div><svg class="a" style="left:0;top:0" width="1920" height="1080"><path d="M1858.0 145.5L1861.5 141.5L1865.0 145.5Z" fill="#b6b6b6"/></svg><div class="a" style="left:1852px;top:149.0px;width:19px;height:11.0px;border:1px solid #c9c9c9;background:#f2f2f2"></div><svg class="a" style="left:0;top:0" width="1920" height="1080"><path d="M1858.0 152.5L1861.5 156.5L1865.0 152.5Z" fill="#b6b6b6"/></svg>
<div class="cb cbd" style="left:1782px;top:178px"><i></i></div>
<span class="t" style="left:1801px;top:179.9px;font-size:13px;color:#838383">Trig</span>
<div class="cb cbd" style="left:1832px;top:178px"><i></i></div>
<span class="t" style="left:1852px;top:179.9px;font-size:13px;color:#838383">Inv</span>
<div class="grp" style="left:1781px;top:206px;width:90px;height:120px"></div><span class="gl" style="left:1787px;top:199px;font-size:13px;color:#000;background:#f0f0f0">Trigger</span>
<span class="t" style="left:1801px;top:217.3px;font-size:13px;color:#838383">Slope</span>
<div class="a" style="left:1788px;top:234px;width:15px;height:15px;border-radius:50%;border:1px solid #b1b1b1;background:#f4f4f4"><div class="a" style="left:2px;top:2px;width:9px;height:9px;border-radius:50%;background:#f4f4f4;box-shadow:0 0 0 1px #dcdcdc"></div><div class="a" style="left:3px;top:3px;width:7px;height:7px;border-radius:50%;background:radial-gradient(circle at 40% 35%,#d0d0d0,#8f8f8f)"></div></div>
<span class="t" style="left:1807px;top:235.0px;font-size:13px;color:#838383">Positive</span>
<div class="a" style="left:1788px;top:254px;width:15px;height:15px;border-radius:50%;border:1px solid #b1b1b1;background:#f4f4f4"><div class="a" style="left:2px;top:2px;width:9px;height:9px;border-radius:50%;background:#f4f4f4;box-shadow:0 0 0 1px #dcdcdc"></div></div>
<span class="t" style="left:1807px;top:255.5px;font-size:13px;color:#838383">Negative</span>
<span class="t" style="left:1791px;top:279px;font-family:'Liberation Serif',serif;font-weight:bold;font-size:9px;letter-spacing:-.1px;color:#838383">Delta Th %</span>
<div class="edit" style="left:1791px;top:293px;width:50px;height:23px;border-color:#b4b6ba #c9ccd0 #cfd3d7 #c6c8cc"></div><span class="t" style="left:1795px;top:298.4px;font-size:12.5px;color:#838383;letter-spacing:-.55px">25</span>
<div class="a" style="left:1841px;top:292px;width:20px;height:25px;background:#fbfbfb"></div><div class="a" style="left:1842px;top:293.0px;width:18px;height:11.5px;border:1px solid #c9c9c9;background:#f2f2f2"></div><svg class="a" style="left:0;top:0" width="1920" height="1080"><path d="M1847.5 300.75L1851.0 296.75L1854.5 300.75Z" fill="#b6b6b6"/></svg><div class="a" style="left:1842px;top:304.5px;width:18px;height:11.5px;border:1px solid #c9c9c9;background:#f2f2f2"></div><svg class="a" style="left:0;top:0" width="1920" height="1080"><path d="M1847.5 308.25L1851.0 312.25L1854.5 308.25Z" fill="#b6b6b6"/></svg>
<div class="cb cbd" style="left:1780px;top:331px"><i></i></div>
<span class="t" style="left:1799px;top:332.1px;font-size:12px;color:#838383">D/A</span>
<div class="cb cbd" style="left:1780px;top:350px"><i></i></div>
<span class="t" style="left:1799px;top:352.0px;font-size:11px;color:#838383;letter-spacing:-.4px">DCremoval</span>
<div class="cb cbd" style="left:1780px;top:369px"><i></i></div>
<span class="t" style="left:1799px;top:369.3px;font-size:13px;color:#838383;letter-spacing:.35px">Trig left</span>
<div class="cb cbd" style="left:1780px;top:388px"><i></i></div>
<span class="t" style="left:1799px;top:388.3px;font-size:13px;color:#838383;letter-spacing:.35px">Values</span>
<div class="a" style="left:1880px;top:71px;width:14px;height:418px;border:1px solid #a9a9a9;border-radius:3px;background:linear-gradient(90deg,#fbfbfb 0,#ececec 30%,#d2d2d2 60%,#c4c4c4 75%,#dedede 100%);overflow:hidden"></div>
<div class="btn" style="left:1733px;top:485px;width:19px;height:19px;line-height:17px;font-size:13px;font-size:12px;color:#838383;border-color:#adb2b5;background:#f6f6f6;box-shadow:none;">0</div>
<span class="t" style="left:1809px;width:83px;text-align:right;top:492.8px;font-size:13px;color:#838383">-inf dB</span>
<!-- mid strip -->
<span class="t" style="left:10px;top:499.7px;font-size:13px;letter-spacing:-.35px">0.00 - 6.82mS</span>
<div class="a" style="left:115px;top:503px;width:1307px;height:9px;border:1px solid;border-color:#c2c7c9 #fff #fff #c2c7c9;background:#e7eaea"></div>
<div class="a" style="left:114px;top:500px;width:7px;height:14px;border:1px solid #8c9295;border-radius:2px;background:linear-gradient(90deg,#fafafa,#d8d8d8)"></div>
<!-- spectrum -->
<div class="a" style="left:10px;top:527px;width:1632px;height:480px;background:#808080"></div>
<div class="a" style="left:62px;top:527px;width:1529px;height:459px;background:#000"></div>
<div class="a" style="left:1591px;top:527px;width:51px;height:459px;background:#00ff00"></div>
<svg class="a" style="left:0;top:500px" width="1660" height="520" viewBox="0 500 1660 520">
<path d="M154.5 527V985M208.5 527V985M246.5 527V985M276.5 527V985M300.5 527V985M320.5 527V985M338.5 527V985M354.5 527V985M460.5 527V985M514.5 527V985M552.5 527V985M582.5 527V985M606.5 527V985M627.5 527V985M644.5 527V985M660.5 527V985M766.5 527V985M820.5 527V985M859.5 527V985M888.5 527V985M913.5 527V985M933.5 527V985M951.5 527V985M967.5 527V985M1073.5 527V985M1127.5 527V985M1165.5 527V985M1195.5 527V985M1219.5 527V985M1239.5 527V985M1257.5 527V985M1273.5 527V985M1379.5 527V985M1433.5 527V985M1471.5 527V985M1501.5 527V985M1525.5 527V985M1546.5 527V985M1564.5 527V985M1579.5 527V985" stroke="#303030" stroke-width="1" shape-rendering="crispEdges"/>
<path d="M368.5 527V985M674.5 527V985M981.5 527V985M1287.5 527V985" stroke="#606060" stroke-width="1" shape-rendering="crispEdges"/>
<path d="M63 985.5H1591" stroke="#00ff00" stroke-width="1" shape-rendering="crispEdges"/>
<path d="M420.0 985.5 L433.8 984.5 L456.2 984.5 L460.0 985.5 L487.5 985.5 L495.0 983.8 L515.0 982.0 L527.5 980.0 L538.0 975.0 L548.8 980.5 L557.5 977.5 L571.2 977.0 L577.0 976.0 L584.5 967.5 L592.5 979.5 L599.5 951.5 L606.2 962.5 L612.5 973.2 L618.8 963.8 L625.0 984.5 L630.5 966.5 L637.5 974.5 L642.5 978.8 L651.2 977.0 L655.5 962.5 L660.5 972.5 L667.5 973.2 L672.5 977.5 L676.2 966.2 L680.0 970.0 L684.5 948.8 L688.0 953.2 L691.2 972.5 L695.0 967.5 L698.8 983.2 L702.0 970.0 L705.0 971.2 L708.8 956.2 L711.8 950.0 L714.5 957.0 L717.5 944.5 L719.5 953.0 L725.0 950.0 L728.8 962.5 L730.8 959.5 L734.5 971.2 L737.5 973.2 L741.2 978.2 L743.8 976.2 L746.2 978.8 L749.5 978.2 L753.8 982.0 L760.0 983.8 L766.2 985.5" stroke="#00ff00" stroke-width="1" fill="none" shape-rendering="crispEdges"/>
<path d="M1001.5 985V899M1147.5 985V780M1215.5 985V704M1260.5 985V673M1293.5 985V680M1320.5 985V690M1342.5 985V719M1361.5 985V765M1378.5 985V809M1392.5 985V836M1406.5 985V841M1418.5 985V842M1429.5 985V851M1439.5 985V871M1449.5 985V897M1458.5 985V923M1466.5 985V942M1474.5 985V955M1481.5 985V964M1488.5 985V970M1495.5 985V975M1501.5 985V979M1507.5 985V982M1513.5 985V984M1000.5 985V966M1002.5 985V963M1158.5 985V960M1159.5 985V953M1160.5 985V975M1440.5 985V915M1294.5 985V975M1212.5 985V978M1216.5 985V980" stroke="#00ff00" stroke-width="1" shape-rendering="crispEdges"/>
<path d="M1146 985L1148 981L1150 984L1152 980L1154 982L1156 977L1158 972L1161 981L1163 979L1165 983L1168 981L1171 983L1175 982L1179 984L1182 985Z" fill="#00ff00"/>
<path d="M1204 985L1208 983L1211 981L1213 982L1215 983L1218 985Z" fill="#00ff00"/>
<path d="M1066 985.5H1068M1066.5 984.5h1" stroke="#00ff00" stroke-width="1" shape-rendering="crispEdges"/>
<path d="M434 984.5H457" stroke="#00ff00" stroke-width="1" shape-rendering="crispEdges"/><path d="M434 985.5H457" stroke="#000" stroke-width="1" shape-rendering="crispEdges"/>
</svg>
<div class="a" style="left:0;top:987px;width:1660px;height:16px;font-size:12px">
<span class="t" style="left:124.2px;width:60px;text-align:center;top:1px">2</span>
<span class="t" style="left:178.2px;width:60px;text-align:center;top:1px">3</span>
<span class="t" style="left:216.4px;width:60px;text-align:center;top:1px">4</span>
<span class="t" style="left:246.1px;width:60px;text-align:center;top:1px">5</span>
<span class="t" style="left:270.4px;width:60px;text-align:center;top:1px">6</span>
<span class="t" style="left:290.9px;width:60px;text-align:center;top:1px">7</span>
<span class="t" style="left:308.7px;width:60px;text-align:center;top:1px">8</span>
<span class="t" style="left:338.3px;width:60px;text-align:center;top:1px;font-weight:bold">10</span>
<span class="t" style="left:430.6px;width:60px;text-align:center;top:1px">20</span>
<span class="t" style="left:484.5px;width:60px;text-align:center;top:1px">30</span>
<span class="t" style="left:522.8px;width:60px;text-align:center;top:1px">40</span>
<span class="t" style="left:552.5px;width:60px;text-align:center;top:1px">50</span>
<span class="t" style="left:576.7px;width:60px;text-align:center;top:1px">60</span>
<span class="t" style="left:597.2px;width:60px;text-align:center;top:1px">70</span>
<span class="t" style="left:615.0px;width:60px;text-align:center;top:1px">80</span>
<span class="t" style="left:644.7px;width:60px;text-align:center;top:1px;font-weight:bold">100</span>
<span class="t" style="left:736.9px;width:60px;text-align:center;top:1px">200</span>
<span class="t" style="left:790.8px;width:60px;text-align:center;top:1px">300</span>
<span class="t" style="left:829.1px;width:60px;text-align:center;top:1px">400</span>
<span class="t" style="left:858.8px;width:60px;text-align:center;top:1px">500</span>
<span class="t" style="left:883.1px;width:60px;text-align:center;top:1px">600</span>
<span class="t" style="left:921.3px;width:60px;text-align:center;top:1px">800</span>
<span class="t" style="left:951.0px;width:60px;text-align:center;top:1px;font-weight:bold">1k</span>
<span class="t" style="left:1043.2px;width:60px;text-align:center;top:1px">2k</span>
<span class="t" style="left:1097.2px;width:60px;text-align:center;top:1px">3k</span>
<span class="t" style="left:1135.5px;width:60px;text-align:center;top:1px">4k</span>
<span class="t" style="left:1165.1px;width:60px;text-align:center;top:1px">5k</span>
<span class="t" style="left:1189.4px;width:60px;text-align:center;top:1px">6k</span>
<span class="t" style="left:1209.9px;width:60px;text-align:center;top:1px">7k</span>
<span class="t" style="left:1227.7px;width:60px;text-align:center;top:1px">8k</span>
<span class="t" style="left:1257.4px;width:60px;text-align:center;top:1px;font-weight:bold">10k</span>
<span class="t" style="left:1349.6px;width:60px;text-align:center;top:1px">20k</span>
<span class="t" style="left:1403.5px;width:60px;text-align:center;top:1px">30k</span>
<span class="t" style="left:1441.8px;width:60px;text-align:center;top:1px">40k</span>
<span class="t" style="left:1471.5px;width:60px;text-align:center;top:1px">50k</span>
<span class="t" style="left:1495.7px;width:60px;text-align:center;top:1px">60k</span>
<span class="t" style="left:1534.0px;width:60px;text-align:center;top:1px">80k</span>
<span class="t" style="left:1627px;top:0px;font-weight:bold;color:#0000ff;font-size:12px">Hz</span>
</div>
<span class="t" style="left:11px;top:528px;font-size:9px;font-weight:bold;color:#0000ff">%fs</span>
<span class="t" style="left:1626px;top:528px;font-size:9px;font-weight:bold;color:#0000ff">%fs</span>
<span class="t" style="left:1526px;top:537px;font-size:13px;letter-spacing:-.5px;color:#00ffff">0.00000</span>
<div class="a" style="left:10px;top:975px;width:52px;height:10px;overflow:hidden;font-family:'Liberation Serif',serif;font-size:10px;color:#e6e6e6"><span class="t" style="right:4px;top:4px">0.0000</span></div>
<div class="a" style="left:1591px;top:975px;width:51px;height:10px;overflow:hidden;font-family:'Liberation Serif',serif;font-size:10px;color:#000"><span class="t" style="left:3px;top:4px">0.0000</span></div>
<!-- tab panel -->
<div class="a" style="left:1706px;top:526px;width:52px;height:22px;border:1px solid #8c8f95;border-bottom:none;background:linear-gradient(#f4f4f4 0,#ebebeb 48%,#dddddd 52%,#d2d2d2 100%);box-shadow:inset 0 0 0 1px #fbfbfb"></div>
<span class="t" style="left:1711.5px;top:530.3px;font-size:13px;">More</span>
<div class="a" style="left:1759px;top:526px;width:53px;height:22px;border:1px solid #8c8f95;border-bottom:none;background:linear-gradient(#f4f4f4 0,#ebebeb 48%,#dddddd 52%,#d2d2d2 100%);box-shadow:inset 0 0 0 1px #fbfbfb"></div>
<span class="t" style="left:1765.7px;top:530.3px;font-size:13px;">Cepst</span>
<div class="a" style="left:1813px;top:526px;width:53px;height:22px;border:1px solid #8c8f95;border-bottom:none;background:linear-gradient(#f4f4f4 0,#ebebeb 48%,#dddddd 52%,#d2d2d2 100%);box-shadow:inset 0 0 0 1px #fbfbfb"></div>
<span class="t" style="left:1819.4px;top:530.3px;font-size:13px;">THD</span>
<div class="a" style="left:1867px;top:526px;width:20px;height:22px;border:1px solid #8c8f95;border-bottom:none;background:linear-gradient(#f4f4f4 0,#ebebeb 48%,#dddddd 52%,#d2d2d2 100%);box-shadow:inset 0 0 0 1px #fbfbfb"></div>
<span class="t" style="left:1872px;top:530.3px;font-size:13px;">U</span>
<div class="a" style="left:1649px;top:547px;width:1266px;height:406px;width:266px;border:1px solid #898c95;background:#fff"></div>
<div class="a" style="left:1649px;top:524px;width:58px;height:25px;border:1px solid #898c95;border-bottom:none;background:#fff"></div>
<span class="t" style="left:1657.5px;top:528.6px;font-size:13px;">Main</span>
<div class="a" style="left:1877px;top:524px;width:40px;height:23px;background:#f0f0f0"></div>
<div class="a" style="left:1878px;top:526px;width:19px;height:19px;border:1px solid #c3c3c3;background:linear-gradient(#f2f2f2,#e6e6e6 50%,#dadada);box-shadow:inset 0 0 0 1px #fafafa"></div>
<svg class="a" style="left:1881px;top:526px" width="12" height="18"><path d="M7.5 4L3.5 8.5L7.5 13Z" fill="#3b5bd5"/></svg>
<div class="a" style="left:1897px;top:526px;width:19px;height:19px;border:1px solid #c3c3c3;background:linear-gradient(#f2f2f2,#e6e6e6 50%,#dadada);box-shadow:inset 0 0 0 1px #fafafa"></div>
<svg class="a" style="left:1900px;top:526px" width="12" height="18"><path d="M4.5 4L8.5 8.5L4.5 13Z" fill="#3b5bd5"/></svg>
<div class="grp" style="left:1653px;top:551px;width:139px;height:183px"></div>
<div class="cb" style="left:1663px;top:556px"><i></i></div>
<span class="t" style="left:1682px;top:557.6px;font-size:13px;letter-spacing:.15px">Stay on top</span>
<div class="cb" style="left:1663px;top:575px"><i></i></div>
<span class="t" style="left:1682px;top:576.6px;font-size:13px;letter-spacing:.15px">Volt meter</span>
<div class="cb" style="left:1663px;top:595px"><i></i></div>
<span class="t" style="left:1682px;top:596.6px;font-size:13px;letter-spacing:.15px">Freq. meter</span>
<div class="cb" style="left:1663px;top:615px"><i></i></div>
<span class="t" style="left:1682px;top:616.6px;font-size:13px;letter-spacing:.42px">Wave Gen./Rec</span>
<div class="cb" style="left:1663px;top:636px"><i></i></div>
<span class="t" style="left:1682px;top:637.6px;font-size:13px;letter-spacing:.15px">Phase</span>
<div class="cb" style="left:1663px;top:654px"><i></i></div>
<span class="t" style="left:1682px;top:655.6px;font-size:13px;letter-spacing:.15px">THD view</span>
<div class="cb" style="left:1663px;top:674px"><i></i></div>
<span class="t" style="left:1682px;top:675.6px;font-size:13px;letter-spacing:.15px">THD+Noise view</span>
<div class="cb" style="left:1663px;top:694px"><i></i></div>
<span class="t" style="left:1682px;top:695.6px;font-size:13px;letter-spacing:.15px">ZRLC meter</span>
<div class="cb" style="left:1663px;top:713px"><i></i></div>
<span class="t" style="left:1682px;top:714.6px;font-size:13px;letter-spacing:.15px">Fast Rec./Play</span>
<div class="btn" style="left:1802px;top:558px;width:107px;height:19px;line-height:17px;font-size:13px;">Capture scope</div>
<div class="btn" style="left:1802px;top:582px;width:107px;height:18px;line-height:16px;font-size:13px;letter-spacing:-.2px">Capture spectrum</div>
<div class="btn" style="left:1800px;top:604px;width:71px;height:19px;line-height:17px;font-size:13px;">WaveOn</div>
<div class="btn" style="left:1876px;top:604px;width:33px;height:19px;line-height:17px;font-size:13px;">Info</div>
<div class="grp" style="left:1801px;top:630px;width:109px;height:105px"></div>
<span class="t" style="left:1821.5px;top:646.5px;font-size:13px;">wait</span>
<div class="edit" style="left:1860px;top:642px;width:41px;height:23px;border-color:#abadb3 #dbdfe6 #e3e9ef #e2e3ea"></div><span class="t" style="left:1864px;top:647.4px;font-size:12.5px;color:#000;letter-spacing:-.55px">296</span>
<span class="t" style="left:1822px;top:675.9px;font-size:13px;">req.</span>
<div class="edit" style="left:1860px;top:671px;width:41px;height:23px;border-color:#abadb3 #dbdfe6 #e3e9ef #e2e3ea"></div><span class="t" style="left:1864px;top:676.4px;font-size:12.5px;color:#000;letter-spacing:-.55px">-9</span>
<span class="t" style="left:1822px;top:705.0px;font-size:13px;">used</span>
<div class="edit" style="left:1860px;top:699px;width:41px;height:23px;border-color:#abadb3 #dbdfe6 #e3e9ef #e2e3ea"></div><span class="t" style="left:1864px;top:704.4px;font-size:12.5px;color:#000;letter-spacing:-.55px">47</span>
<div class="grp" style="left:1653px;top:744px;width:139px;height:188px"></div><span class="gl" style="left:1659px;top:737px;font-size:13px;color:#000;background:#fff">Y - axis</span>
<div class="a" style="left:1676px;top:762px;width:8px;height:137px;border:1px solid #c2c7c9;border-top:none;border-bottom:none;background:#e4e7e8"></div>
<div class="a" style="left:1673px;top:766px;width:15px;height:7px;border:1px solid #8c9295;border-radius:2px;background:linear-gradient(#fafafa,#d2d2d2)"></div>
<div class="a" style="left:1668px;top:765px;width:4px;height:1px;background:#c5c5c5"></div><div class="a" style="left:1689px;top:765px;width:4px;height:1px;background:#c5c5c5"></div>
<div class="a" style="left:1668px;top:791px;width:4px;height:1px;background:#c5c5c5"></div><div class="a" style="left:1689px;top:791px;width:4px;height:1px;background:#c5c5c5"></div>
<div class="a" style="left:1668px;top:817px;width:4px;height:1px;background:#c5c5c5"></div><div class="a" style="left:1689px;top:817px;width:4px;height:1px;background:#c5c5c5"></div>
<div class="a" style="left:1668px;top:844px;width:4px;height:1px;background:#c5c5c5"></div><div class="a" style="left:1689px;top:844px;width:4px;height:1px;background:#c5c5c5"></div>
<div class="a" style="left:1668px;top:870px;width:4px;height:1px;background:#c5c5c5"></div><div class="a" style="left:1689px;top:870px;width:4px;height:1px;background:#c5c5c5"></div>
<div class="a" style="left:1668px;top:895px;width:4px;height:1px;background:#c5c5c5"></div><div class="a" style="left:1689px;top:895px;width:4px;height:1px;background:#c5c5c5"></div>
<div class="cb" style="left:1722px;top:752px"><i></i></div>
<span class="t" style="left:1742px;top:753.6px;font-size:13px;">Log</span>
<div class="cb" style="left:1722px;top:775px"><i></i></div>
<span class="t" style="left:1742px;top:776.6px;font-size:13px;">Hold</span>
<div class="cb cbd" style="left:1722px;top:798px"><i></i><svg class="a" style="left:-1px;top:-1px" width="16" height="16" viewBox="0 0 16 16"><path d="M3 8.3L5.3 6.9L6.9 10.2C8.5 6.6 10.4 4 12.9 1.9L13.9 2.8C11.4 6 9.4 9.600 7.700 13.600L5.700 13.600Z" fill="#b9bdc6"/></svg></div>
<span class="t" style="left:1742px;top:799.6px;font-size:13px;color:#838383">Lines</span>
<div class="cb" style="left:1722px;top:819px"><i></i></div>
<span class="t" style="left:1742px;top:820.6px;font-size:13px;">Info</span>
<span class="t" style="left:1712.5px;top:839.3px;font-size:13px;">Average</span>
<div class="btn" style="left:1712px;top:855px;width:70px;height:23px;"></div><span class="t" style="left:1716px;top:859.7px;font-size:13px;color:#000">1</span><svg class="a" style="left:1767px;top:864.0px" width="9" height="6"><path d="M0 0.5H9L4.5 5.5Z" fill="#000"/></svg>
<span class="t" style="left:1712.5px;top:882.0px;font-size:13px;">Step</span>
<div class="btn" style="left:1712px;top:899px;width:70px;height:23px;border-color:#b8bcc0;background:#f3f3f3;box-shadow:none;"></div><span class="t" style="left:1716px;top:903.7px;font-size:13px;color:#838383">6 div</span><svg class="a" style="left:1767px;top:908.0px" width="9" height="6"><path d="M0 0.5H9L4.5 5.5Z" fill="#7d7d7d"/></svg>
<div class="btn" style="left:1664px;top:907px;width:38px;height:16px;line-height:14px;font-size:13px;">Auto</div>
<div class="grp" style="left:1801px;top:744px;width:109px;height:122px"></div><span class="gl" style="left:1807px;top:737px;font-size:13px;color:#000;background:#fff">X - axis</span>
<div class="cb" style="left:1811px;top:755px"><i></i><svg class="a" style="left:-1px;top:-1px" width="16" height="16" viewBox="0 0 16 16"><path d="M3 8.3L5.3 6.9L6.9 10.2C8.5 6.6 10.4 4 12.9 1.9L13.9 2.8C11.4 6 9.4 9.600 7.700 13.600L5.700 13.600Z" fill="#4a5f97"/></svg></div>
<span class="t" style="left:1830.6px;top:756.6px;font-size:13px;">Log</span>
<div class="cb" style="left:1866px;top:755px"><i></i></div>
<span class="t" style="left:1885px;top:756.6px;font-size:13px;">3D</span>
<div class="cb cbd" style="left:1811px;top:777px"><i></i></div>
<span class="t" style="left:1830.6px;top:778.6px;font-size:13px;color:#838383">true X</span>
<div class="btn" style="left:1811px;top:796px;width:90px;height:23px;"></div><span class="t" style="left:1815px;top:800.7px;font-size:13px;color:#000">Fit screen</span><svg class="a" style="left:1886px;top:805.0px" width="9" height="6"><path d="M0 0.5H9L4.5 5.5Z" fill="#000"/></svg>
<div class="btn" style="left:1811px;top:830px;width:90px;height:24px;border-color:#b8bcc0;background:#f3f3f3;box-shadow:none;"></div><span class="t" style="left:1815px;top:835.2px;font-size:13px;color:#838383">1/1</span><svg class="a" style="left:1886px;top:839.5px" width="9" height="6"><path d="M0 0.5H9L4.5 5.5Z" fill="#7d7d7d"/></svg>
<div class="grp" style="left:1801px;top:878px;width:109px;height:51px"></div><span class="gl" style="left:1807px;top:871px;font-size:13px;color:#000;background:#fff">Channel(s)</span>
<div class="btn" style="left:1811px;top:893px;width:90px;height:24px;"></div><span class="t" style="left:1815px;top:898.2px;font-size:13px;color:#000">A</span><svg class="a" style="left:1886px;top:902.5px" width="9" height="6"><path d="M0 0.5H9L4.5 5.5Z" fill="#000"/></svg>
<!-- status bar -->
<div class="a" style="left:0;top:1010px;width:1920px;height:1px;background:#a0a0a0"></div>
<div class="a" style="left:0;top:1011px;width:1920px;height:1px;background:#fff"></div>
<div class="a" style="left:0;top:1012px;width:1920px;height:18px;background:#f1eeee"></div>
<div class="a" style="left:0;top:1030px;width:1920px;height:2px;background:#fff"></div>
<span class="t" style="left:3px;top:1014px;font-size:15px;font-style:italic;transform-origin:0 0;transform:scaleX(0.9831)">[Points = 65536]</span>
<span class="t" style="left:119.5px;top:1014px;font-size:15px;font-style:italic;transform-origin:0 0;transform:scaleX(0.9753)">[Sampling = 196000Hz]</span>
<span class="t" style="left:281.75px;top:1014px;font-size:15px;font-style:italic;transform-origin:0 0;transform:scaleX(0.9802)">[Smoothing = Hanning]</span>
<span class="t" style="left:441.25px;top:1014px;font-size:15px;font-style:italic;transform-origin:0 0;transform:scaleX(0.9735)">[Ini = C:\Program Files (x86)\Visual Analyser\VA.ini]</span>
<span class="t" style="left:783px;top:1014px;font-size:15px;font-style:italic;transform-origin:0 0;transform:scaleX(0.8987)">[UID = 9E82FBF60AF4DDFEFD6F22568A4EE6CE]</span>
<!-- taskbar -->
<div class="a" style="left:0;top:1032px;width:1920px;height:48px;overflow:hidden;background:#4a2c28">
<svg class="a" style="left:0;top:0" width="1920" height="48" viewBox="0 0 1920 48" preserveAspectRatio="none">
<defs><linearGradient id="tbg" x1="0" x2="1920" y1="0" y2="0" gradientUnits="userSpaceOnUse">
<stop offset="0" stop-color="#3f2526"/><stop offset=".03" stop-color="#44292a"/><stop offset=".055" stop-color="#4f302d"/><stop offset=".08" stop-color="#5a362e"/><stop offset=".14" stop-color="#5b362e"/><stop offset=".2" stop-color="#5a3026"/><stop offset=".26" stop-color="#5c2c20"/><stop offset=".33" stop-color="#632e20"/><stop offset=".365" stop-color="#6e3824"/><stop offset=".385" stop-color="#8a5a3e"/>
<stop offset=".4" stop-color="#a37350"/><stop offset=".425" stop-color="#a87a54"/><stop offset=".45" stop-color="#9a6a48"/><stop offset=".47" stop-color="#8c5c3e"/><stop offset=".5" stop-color="#94643f"/><stop offset=".53" stop-color="#885839"/><stop offset=".55" stop-color="#6a3c28"/><stop offset=".6" stop-color="#5f3525"/>
<stop offset=".615" stop-color="#5a4050"/><stop offset=".625" stop-color="#564a66"/><stop offset=".71" stop-color="#564a68"/><stop offset=".722" stop-color="#a08058"/><stop offset=".745" stop-color="#a5835a"/><stop offset=".765" stop-color="#9a6a48"/><stop offset=".785" stop-color="#96603f"/><stop offset=".8" stop-color="#5c3329"/><stop offset=".82" stop-color="#5a3229"/><stop offset=".835" stop-color="#69443d"/><stop offset=".87" stop-color="#533432"/><stop offset=".92" stop-color="#4a3030"/><stop offset="1" stop-color="#4a2f2f"/>
</linearGradient><filter id="bl" x="-10%" y="-50%" width="120%" height="200%"><feGaussianBlur stdDeviation="3"/></filter></defs>
<rect width="1920" height="48" fill="url(#tbg)"/>
<g filter="url(#bl)">
<path d="M729 -5L735 -5L752 55L722 55Z" fill="#5f4f5c" opacity=".85"/>
<path d="M851 14L858 14L875 55L840 55Z" fill="#60505e" opacity=".85"/>
<path d="M1192 -5L1215 -5L1215 55L1150 55Z" fill="#564a66"/>
<path d="M1340 -5L1362 -5L1392 55L1340 55Z" fill="#564a68"/>
<path d="M1140 -5L1185 -5L1150 55L1130 55Z" fill="#5f3525" opacity=".6"/>
</g>
</svg>
<div class="a" style="left:0;top:0;width:1920px;height:1px;background:rgba(30,15,15,.75)"></div>
<div class="a" style="left:0;top:1px;width:1920px;height:1px;background:rgba(255,235,230,.32)"></div>
<div class="a" style="left:0;top:2px;width:1920px;height:46px;background:linear-gradient(rgba(255,255,255,.06),rgba(255,255,255,0) 50%,rgba(0,0,0,.06))"></div>
<svg class="a" style="left:9.5px;top:0.3px" width="48" height="47" viewBox="0 0 48 47">
<defs><radialGradient id="orb" cx=".5" cy=".92" r=".95"><stop offset="0" stop-color="#35e4ff"/><stop offset=".28" stop-color="#12a4dc"/><stop offset=".55" stop-color="#0a5c94"/><stop offset=".8" stop-color="#0d4a7c"/><stop offset="1" stop-color="#2a6a9a"/></radialGradient>
<linearGradient id="orbh" x1="0" x2="0" y1="0" y2="1"><stop offset="0" stop-color="#fff" stop-opacity=".75"/><stop offset="1" stop-color="#fff" stop-opacity=".08"/></linearGradient></defs>
<circle cx="23.5" cy="24" r="21.3" fill="url(#orb)" stroke="#c9c0c0" stroke-opacity=".8" stroke-width="1"/>
<circle cx="23.5" cy="24" r="20" fill="none" stroke="#0b3e6a" stroke-opacity=".7" stroke-width="1.2"/>
<path d="M5 20C8 8 18 4 23.5 4S39 8 42 20C36 24.5 30 23 23.5 22S11 20.5 5 20Z" fill="url(#orbh)"/>
<path d="M14 10.5C17 9 20 9.3 23 11L20.7 20C17.8 18.4 14.8 18.3 11.7 19.6Z" fill="#e8552a"/>
<path d="M24.8 11.6C27.8 13.2 30.8 13.3 34 12L31.6 21C28.6 22.4 25.5 22.2 22.5 20.6Z" fill="#7bb63c"/>
<path d="M11.2 21.4C14.2 20 17.3 20.2 20.2 21.8L17.8 31C15 29.4 12 29.3 8.8 30.6Z" fill="#2b8fd6"/>
<path d="M22 22.5C25 24.1 28 24.2 31.1 22.9L28.7 32.3C25.7 33.6 22.6 33.5 19.6 31.8Z" fill="#f8bb22"/>
</svg>
<svg class="a" style="left:84px;top:2px" width="44" height="44" viewBox="0 0 44 44">
<defs><linearGradient id="fo" x1="0" x2="0" y1="0" y2="1"><stop offset="0" stop-color="#fbefae"/><stop offset="1" stop-color="#ecd06a"/></linearGradient>
<linearGradient id="fb" x1="0" x2="0" y1="0" y2="1"><stop offset="0" stop-color="#c4e9f8"/><stop offset=".5" stop-color="#86c8ea"/><stop offset="1" stop-color="#4fa3d6"/></linearGradient></defs>
<path d="M3 5Q3 3.200 5 3.200H18Q20.400 3.200 20.400 5V12H3Z" fill="#ecd27a" stroke="#d2b048" stroke-width=".6"/>
<rect x="6.500" y="4.600" width="11" height="3.200" fill="#fff"/><rect x="6.500" y="4.600" width="2" height="3.200" fill="#2fa64a"/>
<path d="M13.500 7.500Q13.500 5.500 15.500 5.500H29.800Q31.800 5.500 31.800 7.500V14H13.500Z" fill="#eed682" stroke="#d2b048" stroke-width=".6"/>
<rect x="16.500" y="7" width="12" height="3.200" fill="#fff"/><rect x="16.500" y="7" width="2" height="3.200" fill="#e23a22"/>
<path d="M23.800 10.300Q23.800 8.300 25.800 8.300H38Q40 8.300 40 10.300V16H23.800Z" fill="#f0da8a" stroke="#d2b048" stroke-width=".6"/>
<rect x="27" y="9.800" width="11" height="3.200" fill="#fff"/><rect x="27" y="9.800" width="2" height="3.200" fill="#2f86d8"/>
<path d="M2 11.200H22L24.500 13.500H40.500V38H2Z" fill="url(#fo)" stroke="#d9b850" stroke-width=".7"/>
<path d="M6.500 27.500Q6.500 25 9 25H33.500Q36 25 36 27.500V41H27.500V37.500Q27.500 36 26 36H16.500Q15 36 15 37.500V41H6.500Z" fill="url(#fb)" stroke="#4a93c4" stroke-width=".7"/>
</svg>
<svg class="a" style="left:154px;top:8px" width="38" height="38" viewBox="0 0 38 38">
<defs><linearGradient id="mp" x1="0" x2="1" y1="0" y2="1"><stop offset="0" stop-color="#9fd3ee"/><stop offset="1" stop-color="#4c9bd2"/></linearGradient>
<radialGradient id="mo" cx=".4" cy=".3" r=".8"><stop offset="0" stop-color="#fba03a"/><stop offset="1" stop-color="#ee6c1e"/></radialGradient></defs>
<path d="M28 3.5L34.5 4.5V30L28 34Z" fill="#5aa7da"/><path d="M30 3.8V33" stroke="#d6ecf8" stroke-width="1"/>
<path d="M2.500 2.500H29V34L2.500 31Z" fill="url(#mp)"/><path d="M3 3H6.500V31.500L3 31Z" fill="#b9c3cc" opacity=".7"/>
<circle cx="15.600" cy="17" r="10.700" fill="url(#mo)"/>
<path d="M11.500 10.500L22.500 17.300L11.500 24Z" fill="#fff"/>
</svg>
<svg class="a" style="left:225px;top:4px" width="39" height="32" viewBox="0 0 40 32" preserveAspectRatio="none">
<defs><linearGradient id="wg" x1="0" x2="1" y1="0" y2="1"><stop offset="0" stop-color="#4f78b8"/><stop offset=".5" stop-color="#4e9a8e"/><stop offset="1" stop-color="#63b56a"/></linearGradient>
<linearGradient id="wb" x1="0" x2="0" y1="0" y2="1"><stop offset="0" stop-color="#5a82c4"/><stop offset="1" stop-color="#7cc86c"/></linearGradient></defs>
<rect x="1.500" y="1" width="36.500" height="29.500" fill="#fafafa" stroke="#c6cad6" stroke-width="1"/>
<rect x="2" y="1.500" width="35.500" height="2.500" fill="#dfe3ee"/>
<rect x="5" y="6.500" width="15.500" height="19.500" fill="url(#wg)" stroke="#c9c6dd" stroke-width=".8"/>
<path d="M23 7H30M23 9.500H30M23 12H30M23 14.500H30M23 20H30M23 22.500H30M23 25H30" stroke="#dcdcdc" stroke-width="1.400"/>
<rect x="32.500" y="6.500" width="3.300" height="12.500" fill="url(#wb)"/>
</svg>
<div class="a" style="left:282px;top:1px;width:66px;height:46px;border:1px solid rgba(255,255,255,.85);border-radius:3px;background:linear-gradient(100deg,rgba(255,255,255,.55) 0,rgba(255,255,255,.45) 40%,rgba(255,255,255,.38) 100%);box-shadow:inset 0 0 0 1px rgba(80,50,50,.35)"></div>
<svg class="a" style="left:295px;top:4px" width="40.5" height="40.5" viewBox="0 0 41 41"><rect x="0.5" y="0.5" width="40" height="40" fill="rgba(200,170,175,.35)"/><path d="M1 27h9v2h-9zM1 32h9v2h-9zM10 29h7v1h-7zM17 27h7v2h-7zM11 32v5h14v1h-15v-6zM24 29v3h15v1h-16v-4zM26 37h13v1h-13z" fill="#c01008"/><path d="M0.5 0V41M0 0.5H41M5.5 0V41M0 5.5H41M10.5 0V41M0 10.5H41M15.5 0V41M0 15.5H41M20.5 0V41M0 20.5H41M25.5 0V41M0 25.5H41M30.5 0V41M0 30.5H41M35.5 0V41M0 35.5H41M40.5 0V41M0 40.5H41" stroke="#00ff00" stroke-width="1" shape-rendering="crispEdges"/><path d="M0 24.500L5 24L8 23C10 20 10.500 14 11 10C11.500 6 12.500 5 14 5H22C24 5 24.500 7 25 10C25.500 14 26 19 28 21C30 23 33 23 36 23.500L39 25" stroke="#f0e000" stroke-width="1.400" fill="none"/><path d="M31 3.500C31 1.500 36 1 36 3C36 5 33 4.500 33 6.500C33 8.500 37.500 8 37.500 5.500" stroke="#f01010" stroke-width="2.400" fill="none"/><path d="M32.500 5.500L35.500 2.500" stroke="#fff" stroke-width="1"/></svg>
<div class="a" style="left:352px;top:1px;width:66px;height:46px;border:1px solid rgba(255,255,255,.45);border-radius:3px;background:linear-gradient(rgba(255,255,255,.22),rgba(255,255,255,.08) 55%,rgba(255,255,255,.05));box-shadow:inset 0 0 0 1px rgba(40,20,20,.4)"></div>
<svg class="a" style="left:360px;top:4px" width="48" height="42" viewBox="0 0 48 42">
<defs><radialGradient id="sp" cx=".4" cy=".45" r=".7"><stop offset="0" stop-color="#d6dde4"/><stop offset=".7" stop-color="#a9b4bf"/><stop offset="1" stop-color="#8b97a3"/></radialGradient>
<linearGradient id="sb" x1="0" x2="1" y1="0" y2="0"><stop offset="0" stop-color="#aeb8c2"/><stop offset="1" stop-color="#6f7a86"/></linearGradient></defs>
<path d="M22 5L31 8.500L34 12V28L31 32L22 37Z" fill="url(#sb)"/>
<path d="M28 9L36.500 13V27L28 32Z" fill="#8d98a4"/>
<ellipse cx="19" cy="21.500" rx="14.300" ry="18" fill="#9aa5b0"/>
<ellipse cx="19" cy="21.500" rx="12.800" ry="16.500" fill="#eef1f4"/>
<ellipse cx="19.300" cy="21.500" rx="11.200" ry="14.800" fill="url(#sp)"/>
<ellipse cx="24" cy="21" rx="3.400" ry="4.300" fill="#e3e7ea" stroke="#9aa3ad" stroke-width=".8"/>
</svg>
<svg class="a" style="left:1660px;top:0" width="160" height="48" viewBox="1660 1032 160 48" fill="#fff">
<path d="M1671.500 1059.500L1676.600 1054L1681.700 1059.500Z"/>
<path d="M1702.500 1048.500H1707.500V1050H1710.200V1066H1700V1050H1702.500Z" fill="none" stroke="#fff" stroke-width="1.300"/><rect x="1701.500" y="1058" width="7.200" height="6.500"/>
<path d="M1712 1049.500V1053M1716 1049.500V1053" stroke="#fff" stroke-width="1.300"/><path d="M1710.700 1053H1717.300V1056.500L1715 1059V1066H1713V1059L1710.700 1056.500Z"/>
<path d="M1730.700 1048V1066.500" stroke="#fff" stroke-width="1.500"/><path d="M1732 1049.500C1735 1048.500 1738 1049 1740 1051.500C1742 1053.500 1745 1053.500 1748 1052.500L1746.500 1058.500C1743.500 1059.800 1741 1059.500 1739 1058C1737 1056.500 1734.500 1056.500 1732 1057.500Z"/>
<path d="M1759.500 1053.500H1763L1768.500 1048V1066.500L1763 1061H1759.500Z"/><path d="M1771.500 1053.500C1773 1055.500 1773 1059 1771.500 1061M1774.500 1051C1777.500 1054.500 1777.500 1060 1774.500 1063.500" fill="none" stroke="#fff" stroke-width="1.200"/>
<path d="M1791.500 1060.500H1793.500V1063H1791.500ZM1794.800 1058.500H1796.800V1063H1794.800ZM1798 1056H1800V1063H1798ZM1801.300 1053.300H1803.300V1063H1801.300ZM1804.600 1050.500H1806.600V1063H1804.600Z"/>
</svg>
<span class="t" style="left:1835px;top:6px;font-size:15px;color:#fff;transform-origin:0 0;transform:scaleX(.915)">8:58 PM</span>
<span class="t" style="left:1828px;top:27.5px;font-size:15px;color:#fff;transform-origin:0 0;transform:scaleX(.995)">1/23/2019</span>
<div class="a" style="left:1906px;top:1px;width:16px;height:47px;border:1px solid rgba(255,255,255,.35);background:linear-gradient(120deg,rgba(255,255,255,.3),rgba(255,255,255,.08) 60%);box-shadow:inset 0 0 0 1px rgba(30,15,15,.5)"></div>
</div>
</div></body></html>
